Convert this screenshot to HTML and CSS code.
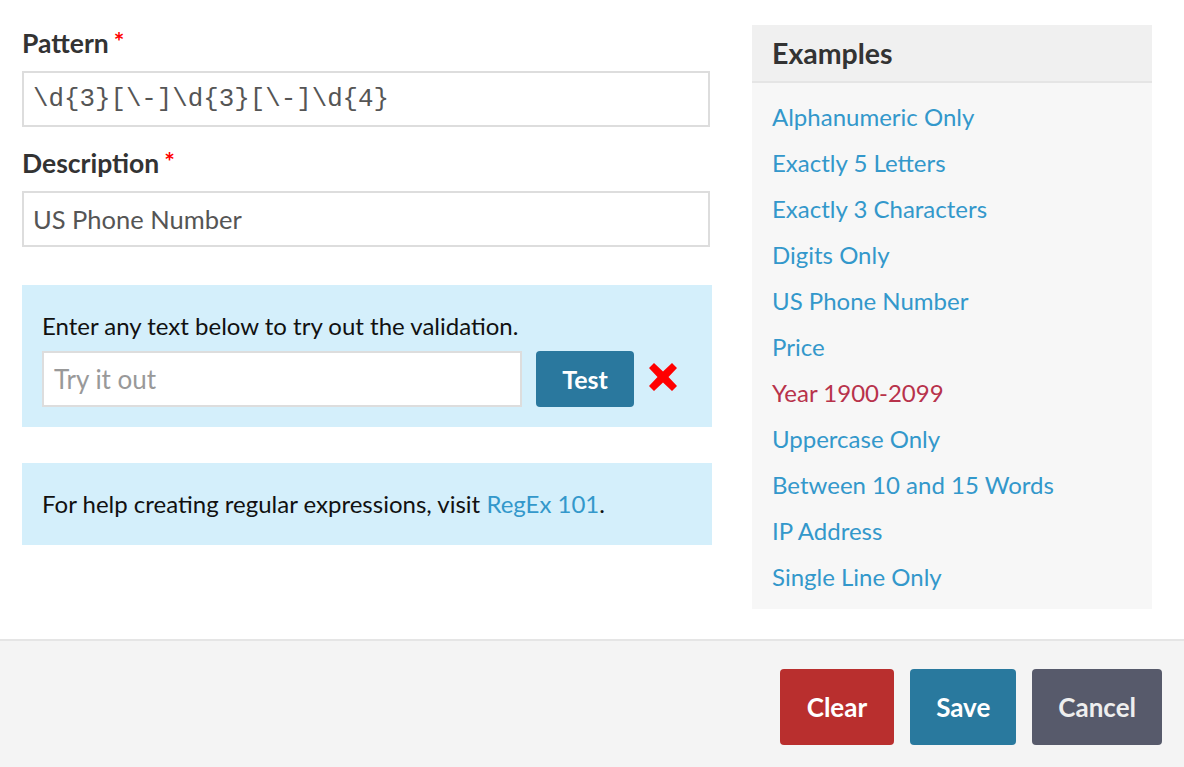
FILE: index.html
```html
<!DOCTYPE html>
<html lang="en">
<head>
<meta charset="utf-8">
<title>Validation Pattern</title>
<link rel="stylesheet" href="styles.css">
</head>
<body>
<div class="main">
  <div class="form-col">
    <label class="field-label">Pattern<span class="req">*</span></label>
    <div class="text-input mono">\d{3}[\-]\d{3}[\-]\d{4}</div>
    <label class="field-label second">Description<span class="req">*</span></label>
    <div class="text-input">US Phone Number</div>

    <div class="info-box try-box">
      <p class="info-text">Enter any text below to try out the validation.</p>
      <div class="try-row">
        <div class="text-input try-input placeholder">Try it out</div>
        <button class="btn btn-test">Test</button>
        <svg class="fail-icon" width="28" height="28" viewBox="0 0 28 28" aria-hidden="true">
          <path d="M5 0 L14 8.5 L23 0 L28 5 L19.5 14 L28 23 L23 28 L14 19.5 L5 28 L0 23 L8.5 14 L0 5 Z" fill="#ff0000"/>
        </svg>
      </div>
    </div>

    <div class="info-box help-box">
      <p class="info-text">For help creating regular expressions, visit <a class="link" href="#">RegEx 101</a>.</p>
    </div>
  </div>

  <aside class="examples">
    <div class="examples-head">Examples</div>
    <ul class="examples-list">
      <li><a class="link" href="#">Alphanumeric Only</a></li>
      <li><a class="link" href="#">Exactly 5 Letters</a></li>
      <li><a class="link" href="#">Exactly 3 Characters</a></li>
      <li><a class="link" href="#">Digits Only</a></li>
      <li><a class="link" href="#">US Phone Number</a></li>
      <li><a class="link" href="#">Price</a></li>
      <li><a class="link active" href="#">Year 1900-2099</a></li>
      <li><a class="link" href="#">Uppercase Only</a></li>
      <li><a class="link" href="#">Between 10 and 15 Words</a></li>
      <li><a class="link" href="#">IP Address</a></li>
      <li><a class="link" href="#">Single Line Only</a></li>
    </ul>
  </aside>
</div>
<div class="footer">
  <button class="btn btn-clear">Clear</button>
  <button class="btn btn-save">Save</button>
  <button class="btn btn-cancel">Cancel</button>
</div>
</body>
</html>
```
FILE: styles.css
```css
* { box-sizing: border-box; }
html, body { margin: 0; padding: 0; }
body {
  font-family: Lato, "Open Sans", sans-serif;
  background: #ffffff;
  color: #333;
  width: 1184px;
  height: 767px;
  display: flex;
  flex-direction: column;
  overflow: hidden;
}
.main {
  display: flex;
  align-items: flex-start;
  gap: 40px;
  padding: 25px 32px 30px 22px;
}
.form-col {
  width: 690px;
  display: flex;
  flex-direction: column;
}
.field-label {
  display: block;
  font-size: 26.5px;
  font-weight: 700;
  line-height: 30px;
  color: #333;
  margin: 3px 0 13px;
}
.field-label.second { margin-top: 21px; }
.req {
  color: #ff0000;
  font-size: 25px;
  font-weight: 700;
  vertical-align: 2px;
  margin-left: 5px;
  line-height: 20px;
}
.text-input {
  width: 688px;
  height: 56px;
  border: 2px solid #dddddd;
  background: #fff;
  padding: 0 9px;
  display: flex;
  align-items: center;
  font-size: 25.5px;
  color: #555;
}
.text-input.mono {
  font-family: "Liberation Mono", "DejaVu Sans Mono", monospace;
  font-size: 25.8px;
  color: #555;
}
.info-box {
  background: #d4effb;
  width: 690px;
}
.try-box {
  margin-top: 38px;
  padding: 30px 20px 20px;
}
.info-text {
  margin: 0;
  font-size: 24px;
  line-height: 22px;
  color: #111;
}
.try-box .info-text { margin-bottom: 14px; }
.try-row {
  display: flex;
  align-items: center;
}
.try-input {
  width: 480px;
  padding-left: 10px;
  font-size: 26px;
}
.placeholder { color: #999; }
.btn {
  font-family: Lato, "Open Sans", sans-serif;
  font-weight: 700;
  font-size: 26px;
  color: #fff;
  border: none;
  border-radius: 4px;
  height: 76px;
  padding: 0 26px;
  cursor: pointer;
}
.btn-test {
  height: 56px;
  width: 98px;
  padding: 0;
  margin-left: 14px;
  background: #2a789e;
  font-size: 25px;
}
.fail-icon {
  margin-left: 15px;
  margin-top: -4px;
}
.help-box {
  margin-top: 36px;
  padding: 30px 20px 30px;
}
.link {
  color: #3398cb;
  text-decoration: none;
}
.link.active { color: #b8324b; }
.examples {
  width: 400px;
  background: #f7f7f7;
}
.examples-head {
  background: #f0f0f0;
  border-bottom: 2px solid #e5e5e5;
  height: 58px;
  line-height: 56px;
  padding: 0 20px;
  font-size: 28.5px;
  font-weight: 700;
  color: #333;
}
.examples-list {
  list-style: none;
  margin: 0;
  padding: 11px 20px 9px;
}
.examples-list li {
  font-size: 24px;
  line-height: 46px;
}
.footer {
  flex: 1;
  background: #f4f4f4;
  border-top: 2px solid #e5e5e5;
  display: flex;
  justify-content: flex-end;
  align-items: flex-start;
  gap: 16px;
  padding: 28px 22px 0 0;
}
.btn-clear { background: #b92f2e; padding: 0 27px; }
.btn-save { background: #29799e; }
.btn-cancel { background: #575a6b; color: #eee; }
```
